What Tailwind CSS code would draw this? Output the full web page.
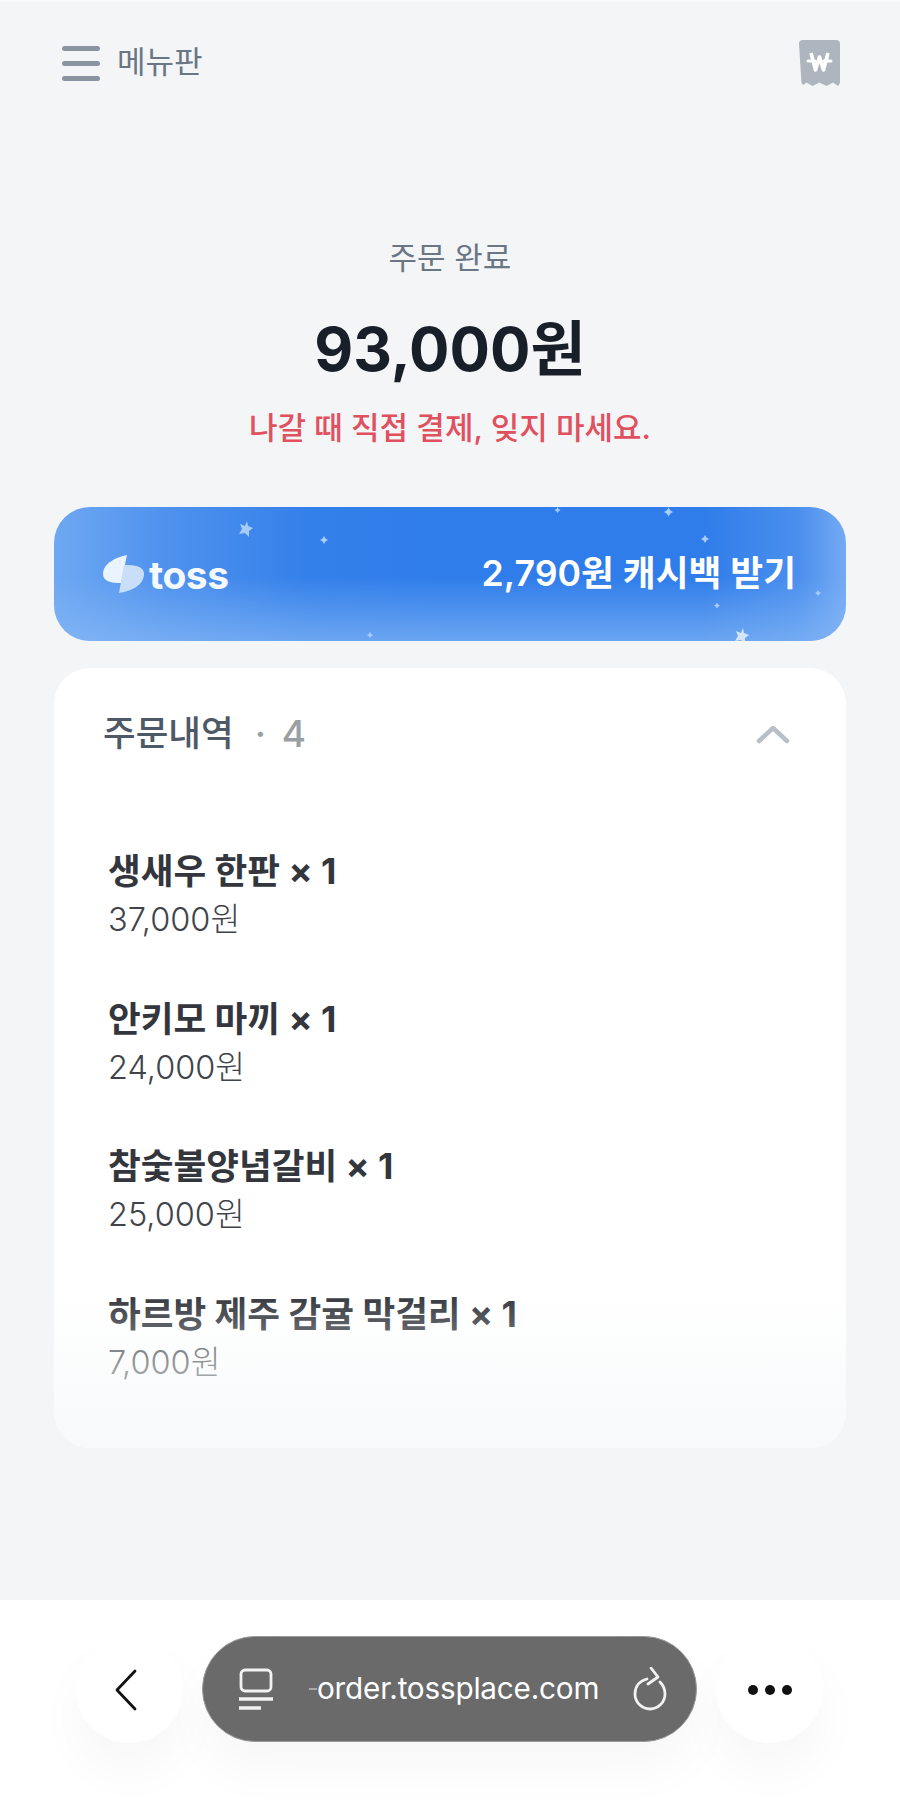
<!DOCTYPE html>
<html lang="ko">
<head>
    <meta charset="UTF-8">
    <meta name="viewport" content="width=device-width, initial-scale=1.0">
    <title>주문 완료</title>
    <script src="https://cdn.jsdelivr.net/npm/@tailwindcss/browser@4"></script>
</head>
<body class="bg-[#f3f5f7] font-['Inter','Noto_Sans_CJK_KR',sans-serif]">
<div class="w-[900px] h-[1818px] flex flex-col overflow-hidden">
    <main class="h-[1600px] px-[54px] flex flex-col border-t-2 border-[#f8f9fa]">
        <!-- top bar -->
        <header class="h-[122px] flex items-center justify-between pl-[8px] pr-[6px]">
            <div class="flex items-center gap-[17px]">
                <div class="w-[38px] flex flex-col gap-[10px]">
                    <div class="h-[5px] rounded-full bg-[#8b95a1]"></div>
                    <div class="h-[5px] rounded-full bg-[#8b95a1]"></div>
                    <div class="h-[5px] rounded-full bg-[#8b95a1]"></div>
                </div>
                <span class="text-[31px] leading-none text-[#6b7684] pb-[3px]">메뉴판</span>
            </div>
            <svg width="41" height="47" viewBox="0 0 41 47">
                <path d="M0 4a4 4 0 0 1 4-4h33a4 4 0 0 1 4 4v39l-2 3-5-3.500-6.500 3.500-7-3.500-7 3.500-6-3.500-3 2.500-2-2z" fill="#adb5bf"/>
                <path d="M12 13l4.500 17L20.500 17l4 13L29 13" fill="none" stroke="#fff" stroke-width="3.600" stroke-linejoin="round"/>
                <path d="M9 21h7M25 21h7" fill="none" stroke="#fff" stroke-width="3" stroke-linecap="round"/>
            </svg>
        </header>

        <!-- summary -->
        <section class="flex flex-col items-center mt-[114px]">
            <p class="text-[31px] leading-[40px] text-[#6b7684]">주문 완료</p>
            <p class="mt-[31px] text-[60px] leading-[80px] font-bold text-[#191f28]">93,000원</p>
            <p class="mt-[19px] text-[31px] leading-[40px] font-medium text-[#e0505f]">나갈 때 직접 결제, 잊지 마세요.</p>
        </section>

        <!-- cashback banner -->
        <section class="relative mt-[59px] h-[134px] rounded-[36px] overflow-hidden bg-[linear-gradient(to_right,#6ea8f2_0%,#4f92ee_14%,#3480ea_32%,#2f7dea_50%,#2f7dea_82%,#4b8fee_94%,#74aaf3_100%)] flex items-center justify-between pl-[49px] pr-[50px]">
            <div class="absolute inset-x-0 bottom-0 h-[64px] bg-linear-to-b from-[#8abaf6]/0 to-[#8abaf6]/65"></div>
            <svg class="absolute left-[185px] top-[14px]" width="14" height="16" viewBox="0 0 14 16"><path d="M8 0l1 5 5 2-4 3 0 6-4-4-6 1 3-5-2-5 5 2z" fill="#a9cbf7"/></svg>
            <svg class="absolute left-[266px] top-[29px]" width="8" height="8" viewBox="0 0 8 8"><path d="M4 0l1.500 2.500 2.500 1.500-2.500 1.500-1.500 2.500-1.500-2.500-2.500-1.500 2.500-1.500z" fill="#a9cbf7"/></svg>
            <svg class="absolute left-[500px] top-[0px]" width="7" height="6" viewBox="0 0 8 8"><path d="M4 0l1.500 2.500 2.500 1.500-2.500 1.500-1.500 2.500-1.500-2.500-2.500-1.500 2.500-1.500z" fill="#a9cbf7"/></svg>
            <svg class="absolute left-[610px] top-[0px]" width="9" height="10" viewBox="0 0 8 8"><path d="M4 0l1.500 2.500 2.500 1.500-2.500 1.500-1.500 2.500-1.500-2.500-2.500-1.500 2.500-1.500z" fill="#a9cbf7"/></svg>
            <svg class="absolute left-[647px] top-[28px]" width="8" height="8" viewBox="0 0 8 8"><path d="M4 0l1.500 2.500 2.500 1.500-2.500 1.500-1.500 2.500-1.500-2.500-2.500-1.500 2.500-1.500z" fill="#a9cbf7"/></svg>
            <svg class="absolute left-[660px] top-[95px]" width="6" height="7" viewBox="0 0 8 8"><path d="M4 0l1.500 2.500 2.500 1.500-2.500 1.500-1.500 2.500-1.500-2.500-2.500-1.500 2.500-1.500z" fill="#a9cbf7"/></svg>
            <svg class="absolute left-[761px] top-[82px]" width="6" height="8" viewBox="0 0 8 8"><path d="M4 0l1.500 2.500 2.500 1.500-2.500 1.500-1.500 2.500-1.500-2.500-2.500-1.500 2.500-1.500z" fill="#a9cbf7"/></svg>
            <svg class="absolute left-[313px] top-[124px]" width="6" height="8" viewBox="0 0 8 8"><path d="M4 0l1.500 2.500 2.500 1.500-2.500 1.500-1.500 2.500-1.500-2.500-2.500-1.500 2.500-1.500z" fill="#a9cbf7"/></svg>
            <svg class="absolute left-[680px] top-[121px]" width="16" height="16" viewBox="0 0 14 16"><path d="M8 0l1 5 5 2-4 3 0 6-4-4-6 1 3-5-2-5 5 2z" fill="#d3e4fb"/></svg>

            <div class="relative flex items-center gap-[5px]">
                <svg width="41" height="38" viewBox="0 0 41 38">
                    <path d="M24 0C14 2 0 8 0 19c0 8 9 9 18 9z" fill="#eaf3fe"/>
                    <path d="M16 38c14-2 25-9 25-19 0-8-9-9-20-9z" fill="#c8def9"/>
                </svg>
                <span class="text-[39px] leading-none font-bold text-[#f4f9ff] tracking-[-0.5px]">toss</span>
            </div>
            <span class="relative text-[35.700px] leading-none font-semibold text-white">2,790원 캐시백 받기</span>
        </section>

        <!-- order list -->
        <section class="relative mt-[27px] h-[780px] rounded-[36px] overflow-hidden bg-white">
            <div class="flex items-center justify-between pl-[49px] pr-[56px] pt-[46px]">
                <div class="flex items-center text-[35.500px] leading-[40px]">
                    <span class="font-medium text-[#4e5968]">주문내역</span>
                    <span class="ml-[21px] font-medium text-[#9a9ea5] text-[37px] tracking-[3px]">· 4</span>
                </div>
                <svg width="34" height="20" viewBox="0 0 34 20"><path d="M3 17L17 4l14 13" fill="none" stroke="#b8bfc6" stroke-width="4.500" stroke-linecap="round" stroke-linejoin="round"/></svg>
            </div>

            <ul class="flex flex-col gap-[52.500px] pl-[54px] pt-[93px]">
                <li>
                    <p class="text-[35.600px] leading-[50px] font-bold text-[#33373d]">생새우 한판 × 1</p>
                    <p class="text-[32.500px] leading-[45px] font-light text-[#3f444b]">37,000원</p>
                </li>
                <li>
                    <p class="text-[35.600px] leading-[50px] font-bold text-[#33373d]">안키모 마끼 × 1</p>
                    <p class="text-[32.500px] leading-[45px] font-light text-[#3f444b]">24,000원</p>
                </li>
                <li>
                    <p class="text-[35.600px] leading-[50px] font-bold text-[#33373d]">참숯불양념갈비 × 1</p>
                    <p class="text-[32.500px] leading-[45px] font-light text-[#3f444b]">25,000원</p>
                </li>
                <li>
                    <p class="text-[35.600px] leading-[50px] font-bold text-[#33373d]">하르방 제주 감귤 막걸리 × 1</p>
                    <p class="text-[32.500px] leading-[45px] font-light text-[#3f444b]">7,000원</p>
                </li>
            </ul>
            <!-- fade over the bottom of the list -->
            <div class="absolute inset-x-0 bottom-0 h-[155px] bg-linear-to-b from-[#f8fafb]/0 to-[#f7f9fa]"></div>
        </section>
    </main>

    <!-- browser toolbar -->
    <footer class="flex-1 bg-white flex items-start pt-[36px] pl-[76px] pr-[77px] justify-between">
        <button class="w-[107px] h-[107px] rounded-full bg-white shadow-[0_28px_50px_rgba(0,0,0,0.035)] flex items-center justify-center">
            <svg width="24" height="44" viewBox="0 0 24 44" class="mr-[8px]"><path d="M21 3L3 22l18 19" fill="none" stroke="#111" stroke-width="2.800" stroke-linecap="round" stroke-linejoin="round"/></svg>
        </button>
        <div class="w-[495px] h-[106px] rounded-full bg-[#6a6a6a] border border-[#9a9a9a] shadow-[0_28px_50px_rgba(0,0,0,0.035)] flex items-center pl-[35px] pr-[28px] text-white">
            <svg width="36" height="42" viewBox="0 0 36 42" fill="none" stroke="#f2f2f2" stroke-width="2.800">
                <rect x="3" y="2" width="30" height="21" rx="4"/>
                <path d="M1 31h34" stroke-width="3.500"/>
                <path d="M1 40h22" stroke-width="3.500"/>
            </svg>
            <span class="ml-[35px] w-[8px] h-[2px] bg-[#a8a8a8]"></span>
            <span class="flex-1 text-[29.700px] leading-none tracking-[-0.2px]">order.tossplace.com</span>
            <svg width="36" height="44" viewBox="0 0 36 44" fill="none" stroke="#f2f2f2" stroke-width="2.800" stroke-linecap="round" stroke-linejoin="round">
                <path d="M15 12C7 14 3 20 3 27a15 15 0 0 0 30 0c0-5-2-9-5-12"/>
                <path d="M19 1l7 9-10 7"/>
            </svg>
        </div>
        <button class="w-[107px] h-[107px] rounded-full bg-white shadow-[0_28px_50px_rgba(0,0,0,0.035)] flex items-center justify-center gap-[7px]">
            <span class="w-[10px] h-[10px] rounded-full bg-[#111]"></span>
            <span class="w-[10px] h-[10px] rounded-full bg-[#111]"></span>
            <span class="w-[10px] h-[10px] rounded-full bg-[#111]"></span>
        </button>
    </footer>
</div>
</body>
</html>
